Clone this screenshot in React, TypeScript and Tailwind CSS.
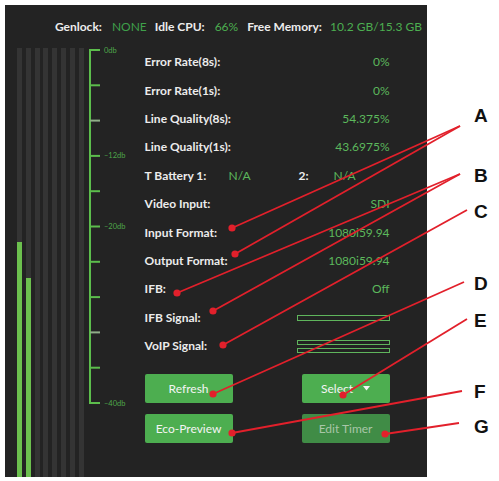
import React from 'react';

const GREEN = 'text-[#5cb85c]';

function Stat({ label, value }: { label: string; value: React.ReactNode }) {
  return (
    <div className="flex h-[28.4px] items-center justify-between">
      <span className="font-bold text-[#ececec]">{label}</span>
      {value}
    </div>
  );
}

function SignalBar({ tall }: { tall?: boolean }) {
  return <div className={`${tall ? 'h-[6px]' : 'h-[5px]'} w-[93px] border border-[#5fb55c]`} />;
}

function Meter() {
  const levels = [235, 199, 0, 0, 0, 0, 0, 0];
  return (
    <div className="flex h-full gap-[3.8px] pl-[12px]">
      {levels.map((h, i) => (
        <div key={i} className="flex h-full w-[5px] flex-col justify-end bg-[#343434]">
          {h > 0 && <div className="w-full bg-[#6cc04e]" style={{ height: h }} />}
        </div>
      ))}
    </div>
  );
}

function Scale() {
  const ticks = Array.from({ length: 11 }, (_, i) => 7 + i * 35.3);
  const labels: Record<number, string> = { 0: '0db', 3: '–12db', 5: '–20db', 10: '–40db' };
  return (
    <svg width="50" height="370" className="-mt-[5px] ml-[1px] shrink-0">
      <line x1="5" y1="6" x2="5" y2={ticks[10] + 1} stroke="#5cbd4c" strokeWidth="2" />
      {ticks.map((y, i) => (
        <g key={i}>
          <line x1="5" y1={y} x2="15" y2={y} stroke={i === 2 || i === 8 ? '#8fae88' : '#5cbd4c'} strokeWidth="2" />
          {labels[i] && (
            <text x="19" y={y + 2.5} fill="#4ea64a" fontSize="7.5" fontFamily="Lato, sans-serif">
              {labels[i]}
            </text>
          )}
        </g>
      ))}
    </svg>
  );
}

function Annotations() {
  const lines: [number, number, number, number][] = [
    [460, 126, 232, 228],
    [460, 126, 235, 254],
    [460, 174, 177, 293],
    [460, 174, 213, 311],
    [467, 210, 223, 345],
    [464, 282, 213, 394],
    [467, 319, 343, 395],
    [462, 391, 232, 433],
    [459, 423, 385, 434],
  ];
  const letters: [string, number][] = [
    ['A', 122],
    ['B', 182],
    ['C', 218],
    ['D', 290],
    ['E', 327],
    ['F', 398],
    ['G', 433],
  ];
  return (
    <svg className="pointer-events-none absolute left-0 top-0" width="499" height="481">
      {lines.map(([x1, y1, x2, y2], i) => (
        <g key={i}>
          <line x1={x1} y1={y1} x2={x2} y2={y2} stroke="#e2202b" strokeWidth="1.8" />
          <circle cx={x2} cy={y2} r="3.6" fill="#e2202b" />
        </g>
      ))}
      {letters.map(([l, y]) => (
        <text key={l} x="474" y={y} fontSize="19" fontWeight="700" fill="#111" fontFamily="'Liberation Sans', Arial, sans-serif">
          {l}
        </text>
      ))}
    </svg>
  );
}

export default function App() {
  return (
    <div className="relative h-[481px] w-[499px] bg-white p-[5px] font-['Lato',sans-serif] text-[12px]">
      <div className="flex h-[472px] w-[422px] flex-col bg-[#232323]">
        {/* Header */}
        <div className="flex h-[43px] items-center justify-end pr-[5px]">
          <span className="font-bold text-[#ececec]">Genlock:</span>
          <span className="ml-[10px] text-[#3f9f4a]">NONE</span>
          <span className="ml-[8px] font-bold text-[#ececec]">Idle CPU:</span>
          <span className="ml-[10px] text-[#4cae50]">66%</span>
          <span className="ml-[9px] font-bold text-[#ececec]">Free Memory:</span>
          <span className="ml-[8px] text-[#4cae50]">10.2 GB/15.3 GB</span>
        </div>

        {/* Body */}
        <div className="flex flex-1">
          <Meter />
          <Scale />
          <div className="ml-[10px] flex w-[245px] flex-col">
            <Stat label="Error Rate(8s):" value={<span className={GREEN}>0%</span>} />
            <Stat label="Error Rate(1s):" value={<span className={GREEN}>0%</span>} />
            <Stat label="Line Quality(8s):" value={<span className={GREEN}>54.375%</span>} />
            <Stat label="Line Quality(1s):" value={<span className={GREEN}>43.6975%</span>} />
            <div className="flex h-[28.4px] items-center">
              <span className="w-[84px] font-bold text-[#ececec]">T Battery 1:</span>
              <span className={`w-[70px] ${GREEN}`}>N/A</span>
              <span className="w-[35px] font-bold text-[#ececec]">2:</span>
              <span className={GREEN}>N/A</span>
            </div>
            <Stat label="Video Input:" value={<span className={GREEN}>SDI</span>} />
            <Stat label="Input Format:" value={<span className={GREEN}>1080i59.94</span>} />
            <Stat label="Output Format:" value={<span className={GREEN}>1080i59.94</span>} />
            <Stat label="IFB:" value={<span className={GREEN}>Off</span>} />
            <Stat label="IFB Signal:" value={<SignalBar tall />} />
            <Stat
              label="VoIP Signal:"
              value={
                <div className="flex flex-col gap-[3px]">
                  <SignalBar />
                  <SignalBar />
                </div>
              }
            />

            <div className="mt-[14px] flex flex-col gap-[11px]">
              <div className="flex justify-between">
                <button className="h-[29px] w-[88px] rounded-[2px] bg-[#4dae50] text-[#f4f4f4]">Refresh</button>
                <button className="flex h-[29px] w-[88px] items-center justify-center gap-[10px] rounded-[2px] bg-[#4dae50] text-[#f4f4f4]">
                  Select
                  <svg width="7" height="5" viewBox="0 0 7 5">
                    <path d="M0 0h7L3.5 4.5z" fill="#f4f4f4" />
                  </svg>
                </button>
              </div>
              <div className="flex justify-between">
                <button className="h-[29px] w-[88px] rounded-[2px] bg-[#4dae50] text-[#f4f4f4]">Eco-Preview</button>
                <button className="h-[29px] w-[88px] rounded-[2px] bg-[#408c46] text-[#a9c6a8]">Edit Timer</button>
              </div>
            </div>
          </div>
        </div>
      </div>
      <Annotations />
    </div>
  );
}
